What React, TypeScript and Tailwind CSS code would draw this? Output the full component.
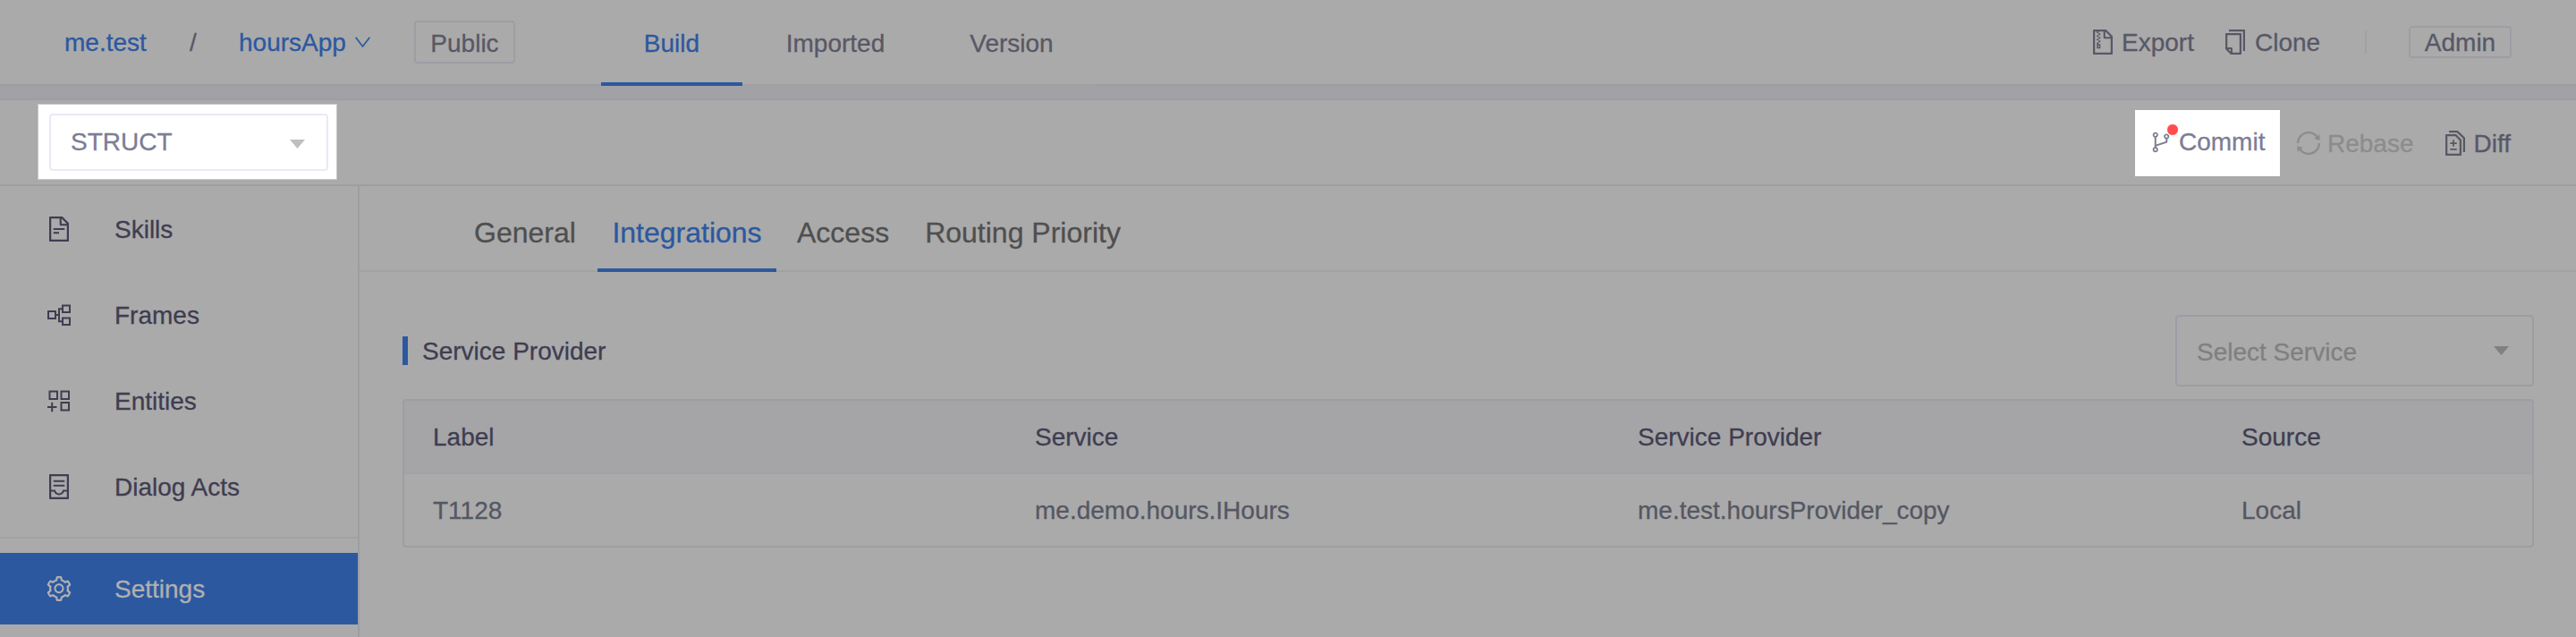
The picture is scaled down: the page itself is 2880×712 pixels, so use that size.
import React from "react";
import {
  AiOutlineBranches,
  AiOutlineContainer,
  AiOutlineCopy,
  AiOutlineDiff,
  AiOutlineFileText,
  AiOutlineFileZip,
  AiOutlineSetting,
  AiOutlineSync,
} from "react-icons/ai";

type P = { children?: React.ReactNode; className?: string };

/* One line of 28px text, nudged down to sit on the optical centre */
const T = ({ children, className = "pt-px" }: P) => (
  <span
    className={`block whitespace-nowrap text-[28px] leading-10 [-webkit-text-stroke:0.3px_currentColor] ${className}`}
  >
    {children}
  </span>
);

const Svg = ({ children, className = "", box }: P & { box: string }) => (
  <svg viewBox={box} className={`block shrink-0 ${className}`} fill="none" stroke="currentColor" strokeWidth="2">
    {children}
  </svg>
);

const FramesIcon = () => (
  <Svg box="0 0 26 24" className="h-6 w-[26px]">
    <path d="M1 8h8v8H1zM17 1.500h8V9h-8zM17 15.500h8V23h-8zM9 12h4M17 5.300h-4v14h4" />
  </Svg>
);
const EntitiesIcon = () => (
  <Svg box="0 0 26 26" className="h-[26px] w-[26px]">
    <path d="M2.500 2.500H11V11H2.500zM15.500 2.500H24V11h-8.500zM15.500 15H24v8.500h-8.500zM5.200 14.800v10.400M0 20h10.400" />
  </Svg>
);

const Caret = ({ className = "" }: P) => (
  <svg viewBox="0 0 17 10" className={`block h-2.5 w-[17px] shrink-0 ${className}`} fill="currentColor">
    <path d="M0 0h17L8.500 10z" />
  </svg>
);

const NavItem = ({ icon, label, active }: { icon: React.ReactNode; label: string; active?: boolean }) => (
  <div className={`flex h-20 items-center ${active ? "bg-[#2c58a0] text-[#b0b0b0]" : "text-[#3f3d51]"}`}>
    <span className="flex w-[132px] shrink-0 justify-center">{icon}</span>
    <T className="-ml-1 pt-px">{label}</T>
  </div>
);

const Row = ({ cells, className }: { cells: string[]; className: string }) => (
  <div className={`grid grid-cols-[673px_674px_675px_1fr] items-center pl-8 ${className}`}>
    {cells.map((c) => (
      <T key={c} className="pt-0.5">{c}</T>
    ))}
  </div>
);

export default function App() {
  return (
    <div
      className="flex h-[712px] w-[2880px] flex-col overflow-hidden bg-[#aaaaaa] text-[#585866]"
      style={{ fontFamily: '"Liberation Sans", Arial, sans-serif' }}
    >
      <header className="flex h-24 shrink-0 border-b-2 border-[#9d9da5]">
        <div className="flex w-[672px] shrink-0 items-center pl-[72px]">
          <T className="w-[140px] pt-0.5 text-[#2c58a0]">me.test</T>
          <T className="w-[55px] pt-0.5">/</T>
          <T className="w-[130px] pt-0.5 text-[#2c58a0]">hoursApp</T>
          <svg viewBox="0 0 17 12" className="block h-3 w-[17px] text-[#2c58a0]" fill="none" stroke="currentColor" strokeWidth="1.7">
            <path d="M.7.7l7.800 10.200L16.300.7" />
          </svg>
          <div className="ml-[49px] flex h-12 w-[113px] items-center justify-center rounded-[4px] border-2 border-[#9d9da5]">
            <T className="pt-1">Public</T>
          </div>
        </div>
        <nav className="flex h-24 w-[554px] shrink-0 border-b-2 border-[#a1a1a1]">
          <div className="flex h-24 w-[158px] shrink-0 items-center justify-center border-b-4 border-[#2c58a0] text-[#2c58a0]">
            <T className="pt-[5px]">Build</T>
          </div>
          <div className="flex h-24 w-[208px] shrink-0 items-center justify-center">
            <T>Imported</T>
          </div>
          <div className="flex h-24 w-[188px] items-center justify-center pr-0.5">
            <T>Version</T>
          </div>
        </nav>
        <div className="ml-auto flex items-center pr-[72px]">
          <AiOutlineFileZip className="h-8 w-8" />
          <T className="ml-[5px] w-[111px] pt-0.5">Export</T>
          <AiOutlineCopy className="h-8 w-8" />
          <T className="ml-1.5 w-[123px] pt-0.5">Clone</T>
          <div className="h-[26px] w-0.5 bg-[#a1a1a1]" />
          <div className="ml-[47px] flex h-9 w-[115px] items-center justify-center rounded-[4px] border-2 border-[#9d9da5]">
            <T className="pt-0.5">Admin</T>
          </div>
        </div>
      </header>

      <div className="h-4 shrink-0 border-b-2 border-[#9d9da5] bg-[#a2a1a6]" />

      <div className="flex h-24 shrink-0 border-b-2 border-[#9d9da5]">
        <div className="ml-[42px] mt-1 flex h-[85px] w-[335px] items-center border border-[#c8c8c8] bg-white pl-3">
          <div className="flex h-16 w-[312px] items-center justify-between rounded-[4px] border-2 border-[#ebe9f7] pl-[22px] pr-6 text-[#7d7d94]">
            <T className="pt-0">STRUCT</T>
            <Caret className="mt-1 text-[#bfbfbf]" />
          </div>
        </div>
        <div className="ml-auto flex pr-[73px]">
          <div className="mt-[11px] flex h-[74px] w-[162px] bg-white pl-[15px] pt-3.5 text-[#7d7d94]">
            <div className="relative mt-2 h-7 w-7">
              <AiOutlineBranches className="h-7 w-7" />
              <div className="absolute -top-[7px] left-5 h-3.5 w-3.5 rounded-full border border-white bg-[#ff4d4f]" />
            </div>
            <T className="ml-1.5 pt-0.5">Commit</T>
          </div>
          <div className="ml-4 mt-7 flex h-10 items-center text-[#8c8c8c]">
            <AiOutlineSync className="h-8 w-8" />
            <T className="ml-[5px] pt-0.5">Rebase</T>
          </div>
          <div className="ml-[30px] mt-7 flex h-10 items-center">
            <AiOutlineDiff className="h-8 w-8" />
            <T className="ml-[5px] pt-0.5">Diff</T>
          </div>
        </div>
      </div>

      <div className="flex min-h-0 flex-1">
        <aside className="w-[402px] shrink-0 border-r-2 border-[#9d9da5] pt-2">
          <div className="flex flex-col gap-4">
            <NavItem icon={<AiOutlineFileText className="h-8 w-8" />} label="Skills" />
            <NavItem icon={<FramesIcon />} label="Frames" />
            <NavItem icon={<EntitiesIcon />} label="Entities" />
            <NavItem icon={<AiOutlineContainer className="h-8 w-8" />} label="Dialog Acts" />
          </div>
          <div className="mt-4 mb-4 h-0.5 bg-[#a2a2a2]" />
          <NavItem active icon={<AiOutlineSetting className="h-8 w-8" />} label="Settings" />
        </aside>

        <main className="min-w-0 flex-1">
          <div className="flex h-24 border-b-2 border-[#a2a2a2] pl-[112px] text-[32px] leading-[104px] text-[#4f4f4f] [-webkit-text-stroke:0.3px_currentColor]">
            <span className="w-[154px] pl-4">General</span>
            <span className="h-24 w-[200px] border-b-4 border-[#2c58a0] text-center text-[#2c58a0]">Integrations</span>
            <span className="pl-[23px]">Access</span>
            <span className="pl-10">Routing Priority</span>
          </div>
          <div className="pl-12 pr-[47px] pt-12">
            <div className="flex h-20 items-center justify-between">
              <div className="flex items-center">
                <div className="h-8 w-1.5 bg-[#2c58a0]" />
                <T className="ml-4 pt-px text-[#3f3d51]">Service Provider</T>
              </div>
              <div className="flex h-20 w-[401px] items-center justify-between rounded-[4px] border-2 border-[#9d9da5] pl-[22px] pr-[26px] text-[#808080]">
                <T className="pt-[3px]">Select Service</T>
                <Caret />
              </div>
            </div>
            <div className="mt-3.5 rounded-[4px] border-2 border-[#9d9da5]">
              <Row
                cells={["Label", "Service", "Service Provider", "Source"]}
                className="h-[82px] border-b-2 border-[#a2a2a2] bg-[#a5a5a7] text-[#3f3d51]"
              />
              <Row cells={["T1128", "me.demo.hours.IHours", "me.test.hoursProvider_copy", "Local"]} className="h-20 text-[#555763]" />
            </div>
          </div>
        </main>
      </div>
    </div>
  );
}
